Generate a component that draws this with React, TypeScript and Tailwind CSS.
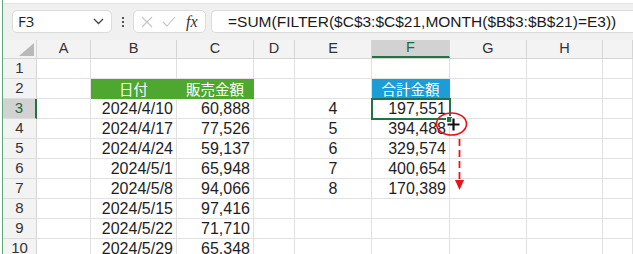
import React from "react";

const cols = [
  { id: "A", w: 54 },
  { id: "B", w: 86 },
  { id: "C", w: 77 },
  { id: "D", w: 41 },
  { id: "E", w: 77 },
  { id: "F", w: 78 },
  { id: "G", w: 77 },
  { id: "H", w: 76 },
  { id: "", w: 30 },
];

const dates = ["2024/4/10", "2024/4/17", "2024/4/24", "2024/5/1", "2024/5/8", "2024/5/15", "2024/5/22", "2024/5/29"];
const sales = ["60,888", "77,526", "59,137", "65,948", "94,066", "97,416", "71,710", "65,348"];
const months = ["4", "5", "6", "7", "8"];
const totals = ["197,551", "394,488", "329,574", "400,654", "170,389"];

// header cells carry their own border colour so the filled band reads as one block
function cellContent(row: number, col: string) {
  if (row === 2 && col === "B")
    return { text: "日付", cls: "bg-[#4ea72e] border-[#4ea72e] text-white justify-center jp" };
  if (row === 2 && col === "C")
    return { text: "販売金額", cls: "bg-[#4ea72e] border-[#4ea72e] text-white justify-center jp" };
  if (row === 2 && col === "F")
    return { text: "合計金額", cls: "bg-[#1a9dd8] border-[#1a9dd8] text-white justify-center jp" };
  if (row >= 3 && col === "B") return { text: dates[row - 3], cls: "border-[#e1e1e1] justify-end pr-[3px]" };
  if (row >= 3 && col === "C") return { text: sales[row - 3], cls: "border-[#e1e1e1] justify-end pr-[3px]" };
  if (row >= 3 && row <= 7 && col === "E") return { text: months[row - 3], cls: "border-[#e1e1e1] justify-center" };
  if (row >= 3 && row <= 7 && col === "F") return { text: totals[row - 3], cls: "border-[#e1e1e1] justify-end pr-[3px]" };
  return null;
}

export default function App() {
  const rows = [1, 2, 3, 4, 5, 6, 7, 8, 9, 10];
  return (
    <div className="relative w-[633px] h-[254px] overflow-hidden bg-white text-[#1e1e1e] font-['Liberation_Sans',sans-serif]">
      <div className="flex h-full">
        <div className="w-[2px] bg-white" />
        <div className="w-[1px] bg-[#5fa77c]" />
        <div className="flex-1 flex flex-col">
          {/* formula bar */}
          <div className="h-[4px] shrink-0 bg-white border-b border-[#e3e3e3]" />
          <div className="h-[36px] shrink-0 bg-[#f0f0f0] flex items-start pt-[6px] pl-[9px]">
            <div className="w-[100px] h-[23px] bg-white border border-[#dcdcdc] rounded-[5px] flex items-center pl-[5px] pr-[7px] text-[15px] font-['Open_Sans',sans-serif]">
              <span className="flex-1">F3</span>
              <svg width="11" height="7" viewBox="0 0 11 7"><path d="M1 1l4.5 4.5L10 1" stroke="#444" strokeWidth="1.3" fill="none" /></svg>
            </div>
            <div className="w-[21px] h-[23px] flex flex-col items-center justify-center gap-[2px]">
              <div className="w-[2px] h-[2px] bg-[#555]" />
              <div className="w-[2px] h-[2px] bg-[#555]" />
              <div className="w-[2px] h-[2px] bg-[#555]" />
            </div>
            <div className="w-[73px] h-[23px] bg-white border border-[#dcdcdc] rounded-[5px] flex items-center pl-[7px] gap-[9px]">
              <svg width="12" height="12" viewBox="0 0 12 12"><path d="M1 1l10 10M11 1L1 11" stroke="#c4c4c4" strokeWidth="1.1" /></svg>
              <svg width="14" height="11" viewBox="0 0 14 11"><path d="M1 6l4 4L13 1" stroke="#c4c4c4" strokeWidth="1.1" fill="none" /></svg>
              <span className="text-[16px] italic font-['Liberation_Serif',serif] text-[#333] leading-none ml-[1px]">fx</span>
            </div>
            <div className="ml-[5px] flex-1 h-[23px] bg-white border border-[#dcdcdc] border-r-0 rounded-l-[5px] flex items-center pl-[16px] text-[15.5px] text-[#1a1a1a] whitespace-nowrap overflow-hidden">
              =SUM(FILTER($C$3:$C$21,MONTH($B$3:$B$21)=E3))
            </div>
          </div>

          {/* column headers */}
          <div className="flex h-[19px] shrink-0 bg-[#f3f3f3] border-b border-[#d5d5d5]">
            <div className="w-[34px] h-full border-r border-[#d5d5d5] flex items-end justify-end pr-[2px] pb-[2px]">
              <svg width="15" height="13" viewBox="0 0 15 13"><path d="M15 0V13H0Z" fill="#b9b9b9" /></svg>
            </div>
            {cols.map((c) => (
              <div
                key={c.id + "h"}
                style={{ width: c.w }}
                className={`h-full flex items-center justify-center text-[14.5px] border-r border-[#d5d5d5] ${
                  c.id === "F" ? "bg-[#d2d2d2] text-[#1e6b3c] border-b-2 border-b-[#217346]" : "text-[#333]"
                }`}
              >
                {c.id}
              </div>
            ))}
          </div>

          {/* rows */}
          {rows.map((r) => (
            <div key={r} className="flex h-[20px] shrink-0">
              <div
                className={`w-[34px] h-full flex items-center justify-center text-[15px] border-b border-[#dcdcdc] ${
                  r === 3
                    ? "bg-[#d2d2d2] text-[#1e6b3c] border-r-2 border-r-[#217346]"
                    : "bg-[#f3f3f3] text-[#333] border-r border-r-[#d5d5d5]"
                }`}
              >
                {r}
              </div>
              {cols.map((c) => {
                const cc = cellContent(r, c.id);
                const jp = cc && cc.cls.includes("jp");
                return (
                  <div
                    key={c.id + r}
                    style={{ width: c.w }}
                    className={`h-full flex items-center whitespace-nowrap border-r border-b ${
                      cc ? cc.cls : "border-[#e1e1e1]"
                    } ${jp ? "font-['Noto_Sans_CJK_JP',sans-serif] text-[14.5px]" : "text-[16px]"}`}
                  >
                    {cc ? cc.text : ""}
                  </div>
                );
              })}
            </div>
          ))}
        </div>
      </div>

      {/* active cell */}
      <div className="absolute left-[371px] top-[98px] w-[80px] h-[22px] border-2 border-[#217346]" />
      <div className="absolute left-[446px] top-[116px] w-[7px] h-[7px] bg-[#217346] border border-white" />

      {/* annotation: circle, cursor, arrow */}
      <svg className="absolute left-0 top-0" width="633" height="254" viewBox="0 0 633 254">
        <ellipse cx="451.5" cy="124" rx="15" ry="11" fill="none" stroke="#e8141b" strokeWidth="1.6" />
        <path d="M453.5 118v13M447 124.5h13" stroke="#fff" strokeWidth="4.5" />
        <path d="M453.5 118.5v12M447.5 124.5h12" stroke="#111" strokeWidth="2.2" />
        <path d="M459.5 139V182" stroke="#e8141b" strokeWidth="1.8" strokeDasharray="7 4" />
        <path d="M455 180h9l-4.5 10z" fill="#e8141b" />
      </svg>
    </div>
  );
}
